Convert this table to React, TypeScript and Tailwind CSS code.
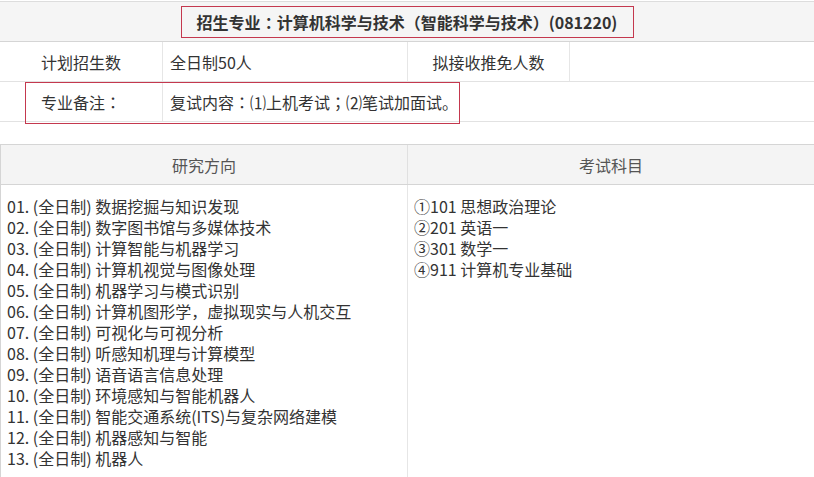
const directions = [
  "数据挖掘与知识发现",
  "数字图书馆与多媒体技术",
  "计算智能与机器学习",
  "计算机视觉与图像处理",
  "机器学习与模式识别",
  "计算机图形学，虚拟现实与人机交互",
  "可视化与可视分析",
  "听感知机理与计算模型",
  "语音语言信息处理",
  "环境感知与智能机器人",
  "智能交通系统(ITS)与复杂网络建模",
  "机器感知与智能",
  "机器人",
];

const subjects = ["①101 思想政治理论", "②201 英语一", "③301 数学一", "④911 计算机专业基础"];

// centred full-width punctuation, as on the original page
const P = ({ c }: { c: string }) => (
  <span style={{ fontFamily: '"Noto Sans CJK TC", sans-serif' }}>{c}</span>
);

export default function App() {
  return (
    <div
      className="w-[814px] h-[477px] overflow-hidden bg-white text-[16px] text-[#333]"
      style={{ fontFamily: '"Noto Sans CJK SC", "Noto Sans", sans-serif' }}
    >
      <div className="relative mt-px border-t border-[#ddd]">
        <div className="h-[40px] flex items-center justify-center bg-[#f5f5f5] border-b border-[#d5d5d5]">
          <div className="h-[32px] w-[453px] flex items-center justify-center border border-[#c4384e] font-bold text-[16px] leading-none">
            招生专业<P c="：" />计算机科学与技术（智能科学与技术）(081220)
          </div>
        </div>
        <div className="h-[40px] flex items-center border-b border-[#e2e2e2]">
          <div className="w-[163px] h-full flex items-center justify-center border-r border-[#e6e6e6]">计划招生数</div>
          <div className="w-[245px] h-full flex items-center pl-[7px] border-r border-[#e6e6e6]">全日制50人</div>
          <div className="w-[162px] h-full flex items-center justify-center border-r border-[#e6e6e6]">拟接收推免人数</div>
          <div className="flex-1 h-full"></div>
        </div>
        <div className="h-[40px] flex items-center border-b border-[#e2e2e2]">
          <div className="w-[163px] h-full flex items-center justify-center border-r border-[#e6e6e6]">
            专业备注<P c="：" />
          </div>
          <div className="flex-1 h-full flex items-center pl-[7px]">
            复试内容<P c="：" />⑴上机考试<P c="；" />⑵笔试加面试。
          </div>
        </div>
        <div className="absolute left-[25px] top-[80px] w-[435px] h-[42px] border border-[#c4384e]"></div>
      </div>

      <div className="mt-[22px] border-t border-l border-[#d5d5d5]">
        <div className="h-[40px] flex bg-[#f4f4f4] border-b border-[#d5d5d5] text-[#555]">
          <div className="w-[407px] flex items-center justify-center border-r border-[#e0e0e0]">研究方向</div>
          <div className="flex-1 flex items-center justify-center">考试科目</div>
        </div>
        <div className="flex">
          <div className="w-[407px] pt-[11px] pl-[6px] leading-[21px] border-r border-[#e6e6e6] pb-4">
            {directions.map((d, i) => (
              <div key={i} className="whitespace-nowrap">
                {String(i + 1).padStart(2, "0")}. (全日制) {d}
              </div>
            ))}
          </div>
          <div className="flex-1 pt-[11px] pl-[6px] leading-[21px]">
            {subjects.map((s) => (
              <div key={s}>{s}</div>
            ))}
          </div>
        </div>
      </div>
    </div>
  );
}
